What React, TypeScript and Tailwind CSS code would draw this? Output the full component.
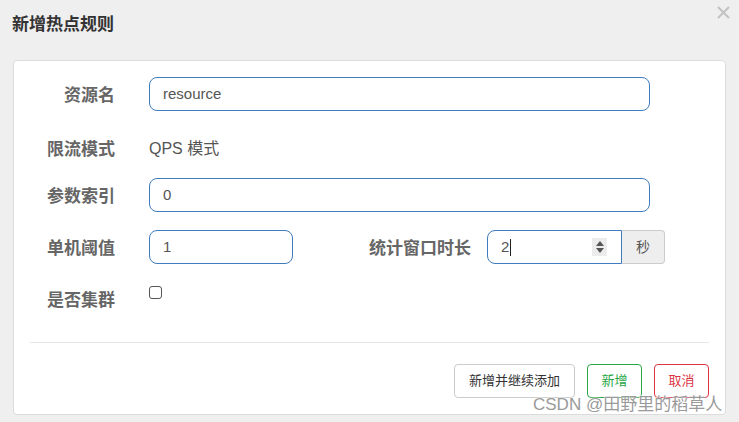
import React from 'react'

const font = { fontFamily: '"Liberation Sans", "Noto Sans CJK SC", sans-serif' }

function Label({ children, top = true }: { children: React.ReactNode; top?: boolean }) {
  return (
    <div className={`w-[101px] shrink-0 text-right text-[17px] font-bold text-[#666] ${top ? 'pt-[3px]' : 'pt-[2px]'}`}>
      {children}
    </div>
  )
}

function Spinner() {
  return (
    <div className="flex h-[18px] w-[15px] flex-col items-center justify-center gap-[2px] bg-[#ececec]">
      <svg width="8" height="5" viewBox="0 0 8 5"><path d="M0 5 L4 0 L8 5 Z" fill="#555" /></svg>
      <svg width="8" height="5" viewBox="0 0 8 5"><path d="M0 0 L4 5 L8 0 Z" fill="#555" /></svg>
    </div>
  )
}

export default function App() {
  return (
    <div className="relative h-[422px] w-[739px] overflow-hidden bg-[#efefef]" style={font}>
      <div className="flex h-[60px] items-start justify-between pl-3 pr-[9px]">
        <h4 className="mt-[12px] text-[17px] font-bold text-[#333]">新增热点规则</h4>
        <button className="mt-[6px]">
          <svg width="13" height="13" viewBox="0 0 13 13">
            <path d="M1 1 L12 12 M12 1 L1 12" stroke="#c2c2c2" strokeWidth="2" />
          </svg>
        </button>
      </div>

      <div className="ml-[13px] w-[713px] rounded-[4px] border border-[#dcdcdc] bg-white px-[16px] pb-[16px] pt-[16px]">
        <div className="-mx-[16px] flex flex-col text-[15px] text-[#555]">
          <div className="flex h-[34px] items-center">
            <Label>资源名</Label>
            <div className="ml-[34px] flex h-[34px] w-[501px] items-center rounded-[8px] border border-[#3f7bbd] px-[13px] pt-[1px]">
              resource
            </div>
          </div>

          <div className="mt-[20px] flex h-[34px] items-center">
            <Label>限流模式</Label>
            <div className="ml-[34px] pt-[1px] text-[16px]">QPS 模式</div>
          </div>

          <div className="mt-[13px] flex h-[34px] items-center">
            <Label>参数索引</Label>
            <div className="ml-[34px] flex h-[34px] w-[501px] items-center rounded-[8px] border border-[#3f7bbd] px-[13px] pt-[1px]">
              0
            </div>
          </div>

          <div className="mt-[18px] flex h-[34px] items-center">
            <Label>单机阈值</Label>
            <div className="ml-[34px] flex h-[34px] w-[144px] items-center rounded-[8px] border border-[#3f7bbd] px-[13px] pt-[1px]">
              1
            </div>
            <div className="ml-[76px] pt-[3px] text-[17px] font-bold text-[#666]">统计窗口时长</div>
            <div className="ml-[16px] flex h-[34px]">
              <div className="flex w-[135px] items-center justify-between rounded-l-[8px] border border-[#3f7bbd] pl-[13px] pr-[14px]">
                <span className="flex items-center">
                  2<span className="ml-[1px] inline-block h-[17px] w-px bg-[#222]" />
                </span>
                <Spinner />
              </div>
              <div className="flex w-[43px] items-center justify-center rounded-r-[4px] border border-l-0 border-[#ccc] bg-[#eee] text-[14px] text-[#555]">
                秒
              </div>
            </div>
          </div>

          <div className="mt-[22px] flex h-[30px] items-start">
            <Label top={false}>是否集群</Label>
            <div className="ml-[34px] h-[13px] w-[13px] rounded-[3px] border border-[#555] bg-white" />
          </div>
        </div>

        <div className="mt-[26px] h-px bg-[#e6e6e6]" />

        <div className="mt-[21px] flex justify-end gap-[12px] text-[13px]">
          <button className="h-[34px] w-[121px] rounded-[4px] border border-[#ccc] bg-white text-[#333]">
            新增并继续添加
          </button>
          <button className="h-[34px] w-[55px] rounded-[4px] border border-[#28a745] bg-white text-[#28a745]">
            新增
          </button>
          <button className="h-[34px] w-[55px] rounded-[4px] border border-[#dc3545] bg-white text-[#dc3545]">
            取消
          </button>
        </div>
      </div>

      <div
        className="absolute left-[533px] top-[392px] text-[17px] text-[#9a9a9a]"
        style={{ textShadow: '0 0 2px #fff, 0 0 2px #fff' }}
      >
        CSDN @田野里的稻草人
      </div>
    </div>
  )
}
